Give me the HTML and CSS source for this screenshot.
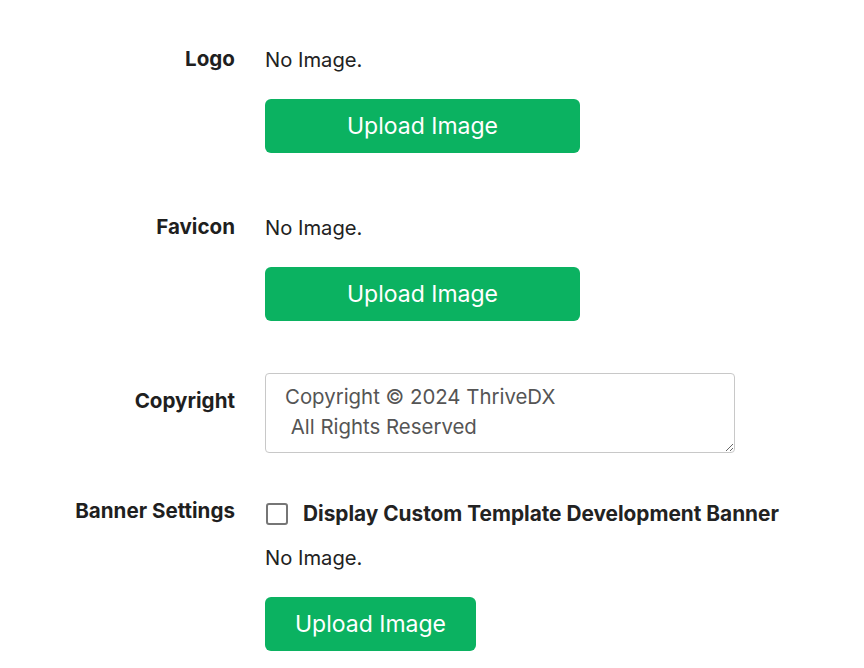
FILE: index.html
```html
<!DOCTYPE html>
<html>
<head>
<meta charset="utf-8">
<link rel="stylesheet" href="styles.css">
</head>
<body>
<form class="settings">
  <div class="row row-logo">
    <div class="label">Logo</div>
    <div class="field">
      <div class="no-image">No Image.</div>
      <button type="button" class="btn btn-wide">Upload Image</button>
    </div>
  </div>
  <div class="row row-favicon">
    <div class="label">Favicon</div>
    <div class="field">
      <div class="no-image">No Image.</div>
      <button type="button" class="btn btn-wide">Upload Image</button>
    </div>
  </div>
  <div class="row row-copyright">
    <div class="label label-copyright">Copyright</div>
    <div class="field">
      <textarea class="textarea">Copyright © 2024 ThriveDX
 All Rights Reserved</textarea>
    </div>
  </div>
  <div class="row row-banner">
    <div class="label">Banner Settings</div>
    <div class="field">
      <label class="check">
        <span class="box"></span>
        <span class="check-text">Display Custom Template Development Banner</span>
      </label>
      <div class="no-image no-image-banner">No Image.</div>
      <button type="button" class="btn btn-narrow">Upload Image</button>
    </div>
  </div>
</form>
</body>
</html>
```
FILE: styles.css
```css
html, body {
  margin: 0;
  padding: 0;
  background: #fff;
}
body {
  font-family: Inter, "Open Sans", sans-serif;
  color: #222;
}
.settings {
  padding-top: 47px;
}
.row {
  display: grid;
  grid-template-columns: 235px 1fr;
  column-gap: 30px;
  align-items: start;
}
.row-logo { margin-bottom: 62px; }
.row-favicon { margin-bottom: 52px; }
.row-copyright { margin-bottom: 46px; }
.label {
  text-align: right;
  font-weight: 700;
  font-size: 20.6px;
  line-height: 24px;
  color: #1f1f1f;
}
.label-copyright {
  padding-top: 16px;
}
.field {
  display: flex;
  flex-direction: column;
  align-items: flex-start;
}
.no-image {
  font-size: 20.2px;
  line-height: 24px;
  padding-top: 1px;
  color: #222;
}
.btn {
  margin-top: 27px;
  height: 54px;
  border: none;
  border-radius: 6px;
  background: #0bb261;
  color: #fff;
  font-family: inherit;
  font-size: 23px;
  padding: 0;
}
.btn-wide { width: 315px; }
.btn-narrow { width: 211px; }
.textarea {
  box-sizing: border-box;
  width: 470px;
  height: 80px;
  border: 1px solid #c8c8c8;
  border-radius: 4px;
  padding: 8px 19px;
  font-family: inherit;
  font-size: 20.4px;
  line-height: 30px;
  color: #555;
  resize: vertical;
  margin: 0;
}
.check {
  display: flex;
  align-items: center;
  gap: 15px;
  height: 24px;
  margin-top: 3px;
  margin-left: 1px;
}
.box {
  box-sizing: border-box;
  width: 22px;
  height: 22px;
  border: 2px solid #767676;
  border-radius: 3px;
  background: #fff;
}
.check-text {
  font-weight: 700;
  font-size: 20.8px;
  line-height: 24px;
  color: #222;
}
.no-image-banner {
  margin-top: 19px;
}
```
